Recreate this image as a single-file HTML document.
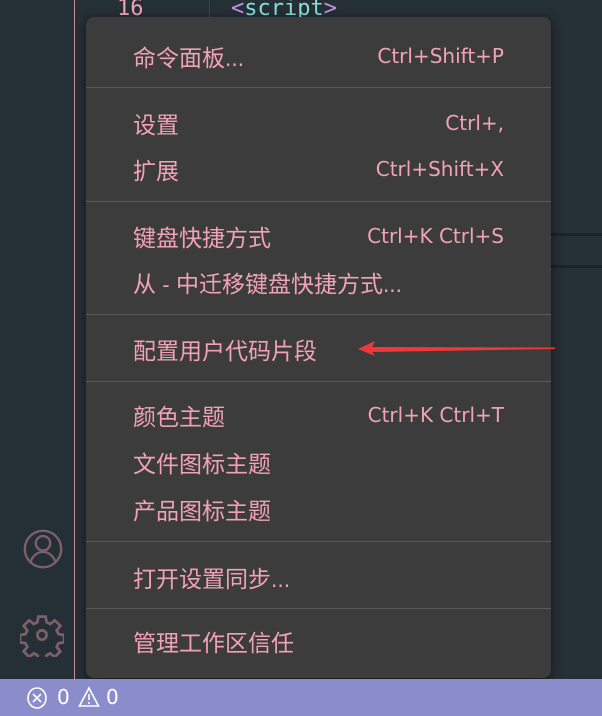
<html><head><style>
body{margin:0;width:602px;height:716px;background:#252f36;position:relative;overflow:hidden;font-family:"DejaVu Sans","Noto Sans CJK SC",sans-serif}
.menu{position:absolute;left:86px;top:17px;width:465px;height:661px;background:#3c3c3c;border-radius:8px;box-shadow:0 2px 10px rgba(0,0,0,.5)}
.it{position:absolute;left:47px;right:47px;height:30px;line-height:30px;color:#f2a2b6;font-size:20px;white-space:nowrap}
.it span{position:absolute;right:0;top:0}
.it i{font-style:normal;font-size:23px;font-family:"Noto Sans CJK SC",sans-serif}
.sep{position:absolute;left:0;right:0;height:1px;background:#5a5a5a}
</style></head><body>
<div style="position:absolute;left:74px;top:0;width:1px;height:679px;background:#c98a9a"></div>
<div style="position:absolute;left:209px;top:0;width:1px;height:20px;background:#3a444c"></div>
<div style="position:absolute;left:117px;top:-4px;font:22px 'DejaVu Sans Mono',monospace;color:#f2a2b6">16</div>
<div style="position:absolute;left:231px;top:-4px;font:22px 'DejaVu Sans Mono',monospace;color:#89ddd8"><span style="color:#c792ea">&lt;</span>script<span style="color:#c792ea">&gt;</span></div>
<div style="position:absolute;left:551px;top:233px;width:51px;height:3px;background:#1c2226"></div>
<div style="position:absolute;left:551px;top:265px;width:51px;height:3px;background:#1c2226"></div>
<svg style="position:absolute;left:20px;top:527px" width="46" height="46" viewBox="0 0 48 48" fill="none" stroke="#7d5f6b" stroke-width="2.5"><circle cx="24" cy="23" r="19"/><circle cx="24" cy="17" r="7.5"/><path d="M11 36c3-7 8-10 13-10s10 3 13 10"/></svg>
<svg style="position:absolute;left:20px;top:613px" width="44" height="44" viewBox="0 0 48 48" fill="none" stroke="#7d5f6b" stroke-width="3"><path d="M20 4h8l1 6 4 2 5-4 6 6-4 5 2 4 6 1v8l-6 1-2 4 4 5-6 6-5-4-4 2-1 6h-8l-1-6-4-2-5 4-6-6 4-5-2-4-6-1v-8l6-1 2-4-4-5 6-6 5 4 4-2z"/><circle cx="24" cy="24" r="5"/></svg>
<div class="menu">
<div class="it" style="top:24px"><i>命令面板</i>...<span>Ctrl+Shift+P</span></div>
<div class="sep" style="top:70px"></div>
<div class="it" style="top:91px"><i>设置</i><span>Ctrl+,</span></div>
<div class="it" style="top:137px"><i>扩展</i><span>Ctrl+Shift+X</span></div>
<div class="sep" style="top:184px"></div>
<div class="it" style="top:204px"><i>键盘快捷方式</i><span>Ctrl+K Ctrl+S</span></div>
<div class="it" style="top:250px"><i>从</i> - <i>中迁移键盘快捷方式</i>...</div>
<div class="sep" style="top:297px"></div>
<div class="it" style="top:317px"><i>配置用户代码片段</i></div>
<div class="sep" style="top:364px"></div>
<div class="it" style="top:383px"><i>颜色主题</i><span>Ctrl+K Ctrl+T</span></div>
<div class="it" style="top:430px"><i>文件图标主题</i></div>
<div class="it" style="top:477px"><i>产品图标主题</i></div>
<div class="sep" style="top:524px"></div>
<div class="it" style="top:545px"><i>打开设置同步</i>...</div>
<div class="sep" style="top:591px"></div>
<div class="it" style="top:609px"><i>管理工作区信任</i></div>
</div>
<svg style="position:absolute;left:355px;top:338px" width="200" height="20"><polygon points="3,11 20,3 17,9 200,9.5 200,11 17,14 20,18" fill="#f03838"/></svg>
<div style="position:absolute;left:0;top:679px;width:602px;height:37px;background:#8a8dca;color:#fff;font-size:20px">
<svg style="position:absolute;left:26px;top:7px" width="22" height="24" fill="none" stroke="#fff" stroke-width="1.6"><ellipse cx="11" cy="12" rx="9" ry="10"/><path d="M7 8l8 8M15 8l-8 8"/></svg>
<span style="position:absolute;left:57px;top:6px">0</span>
<svg style="position:absolute;left:78px;top:7px" width="22" height="22" fill="none" stroke="#fff" stroke-width="1.6"><path d="M11 2L20.5 20H1.5z"/><path d="M11 8v6M11 16v2"/></svg>
<span style="position:absolute;left:106px;top:6px">0</span>
</div>
</body></html>
